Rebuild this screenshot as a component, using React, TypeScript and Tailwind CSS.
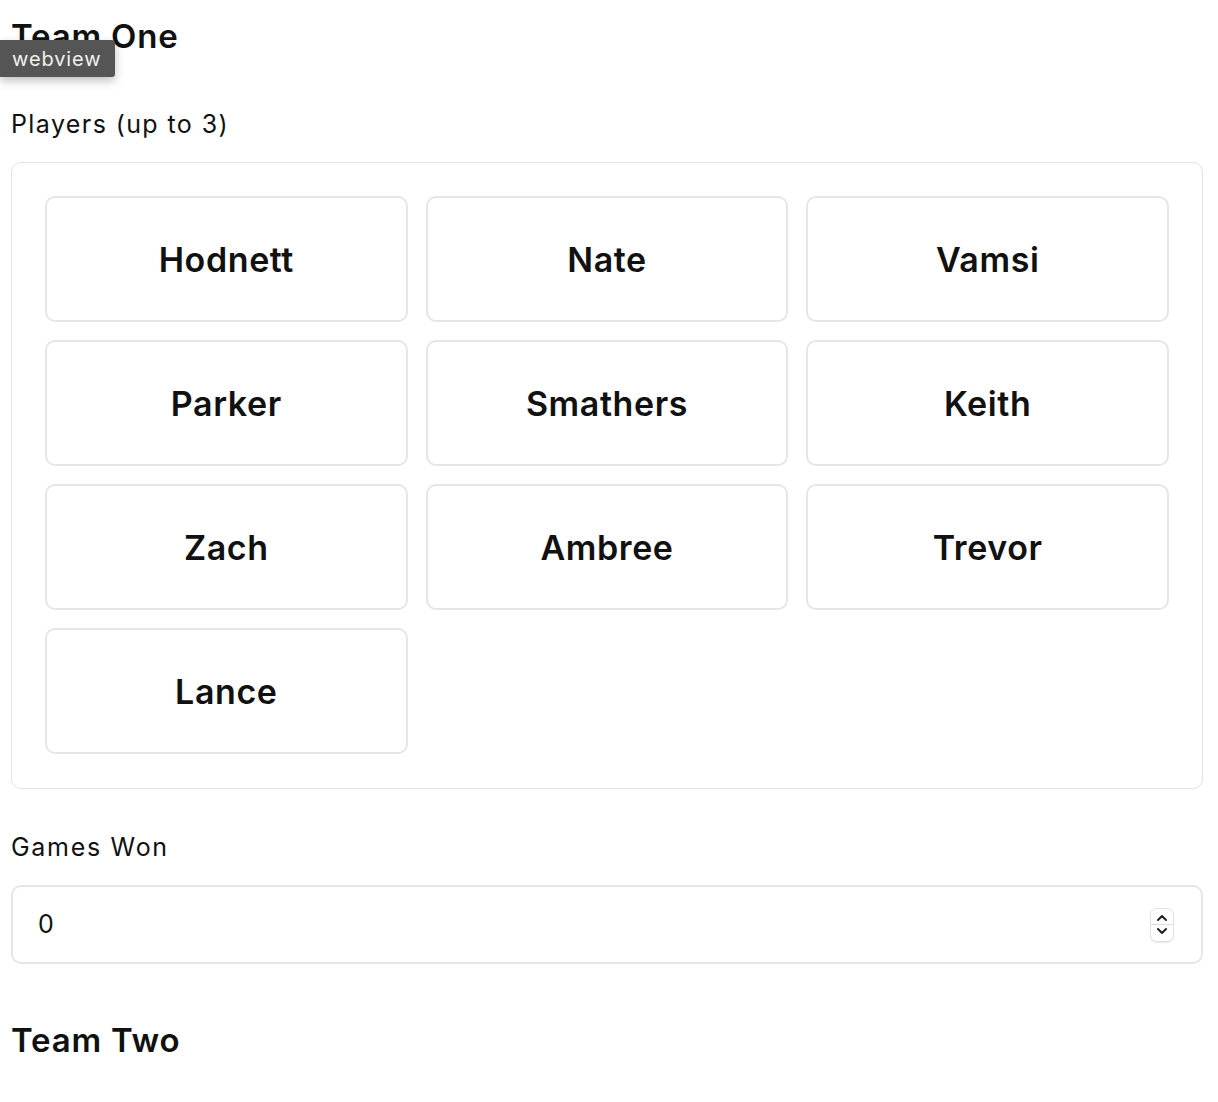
import React from "react";

const players = ["Hodnett", "Nate", "Vamsi", "Parker", "Smathers", "Keith", "Zach", "Ambree", "Trevor", "Lance"];

function Spinner() {
  return (
    <div className="flex h-[34px] w-[24px] flex-col items-center justify-center rounded-[7px] border border-[#e2e2e2] bg-white shadow-[0_1px_1px_rgba(0,0,0,0.08)]">
      <svg width="14" height="12" viewBox="0 0 14 12" className="block">
        <path d="M3 8 L7 4 L11 8" fill="none" stroke="#222" strokeWidth="2" strokeLinecap="round" strokeLinejoin="round" />
      </svg>
      <div className="h-px w-full bg-[#dedede]" />
      <svg width="14" height="12" viewBox="0 0 14 12" className="block">
        <path d="M3 4 L7 8 L11 4" fill="none" stroke="#222" strokeWidth="2" strokeLinecap="round" strokeLinejoin="round" />
      </svg>
    </div>
  );
}

export default function App() {
  return (
    <div className="relative min-h-[1102px] bg-white text-[#111] font-['Inter','Noto_Sans',sans-serif]">
      <div className="w-[1203px] pl-[11px]">
        <h1 className="pt-[16px] text-[33px] font-semibold leading-[40px] tracking-[0.8px]">Team One</h1>
        <div className="mt-[52px] text-[25px] leading-[32px] tracking-[1.4px]">Players (up to 3)</div>
        <div className="mt-[22px] rounded-[10px] border border-[#e3e3e3] px-[33px] pt-[33px] pb-[34px]">
          <div className="grid grid-cols-3 gap-[18px]">
            {players.map((p) => (
              <button
                key={p}
                className="flex h-[126px] items-center justify-center rounded-[10px] border-2 border-[#e6e6e6] bg-white text-[34px] font-semibold tracking-[0.6px]"
              >
                {p}
              </button>
            ))}
          </div>
        </div>
        <div className="mt-[42px] text-[25px] leading-[32px] tracking-[1.7px]">Games Won</div>
        <div className="mt-[22px] flex h-[79px] items-center justify-between rounded-[10px] border-2 border-[#e6e6e6] pl-[25px] pr-[27px]">
          <span className="text-[25px]">0</span>
          <Spinner />
        </div>
        <h2 className="mt-[56px] text-[33px] font-semibold leading-[40px] tracking-[0.8px]">Team Two</h2>
      </div>
      <div className="absolute left-0 top-[40px] flex h-[37px] w-[115px] items-center rounded-r-[3px] bg-[#555555] pl-[12px] text-[20px] tracking-[0.9px] text-[#f0f0f0] shadow-[0_4px_10px_rgba(0,0,0,0.25)]">
        webview
      </div>
    </div>
  );
}
